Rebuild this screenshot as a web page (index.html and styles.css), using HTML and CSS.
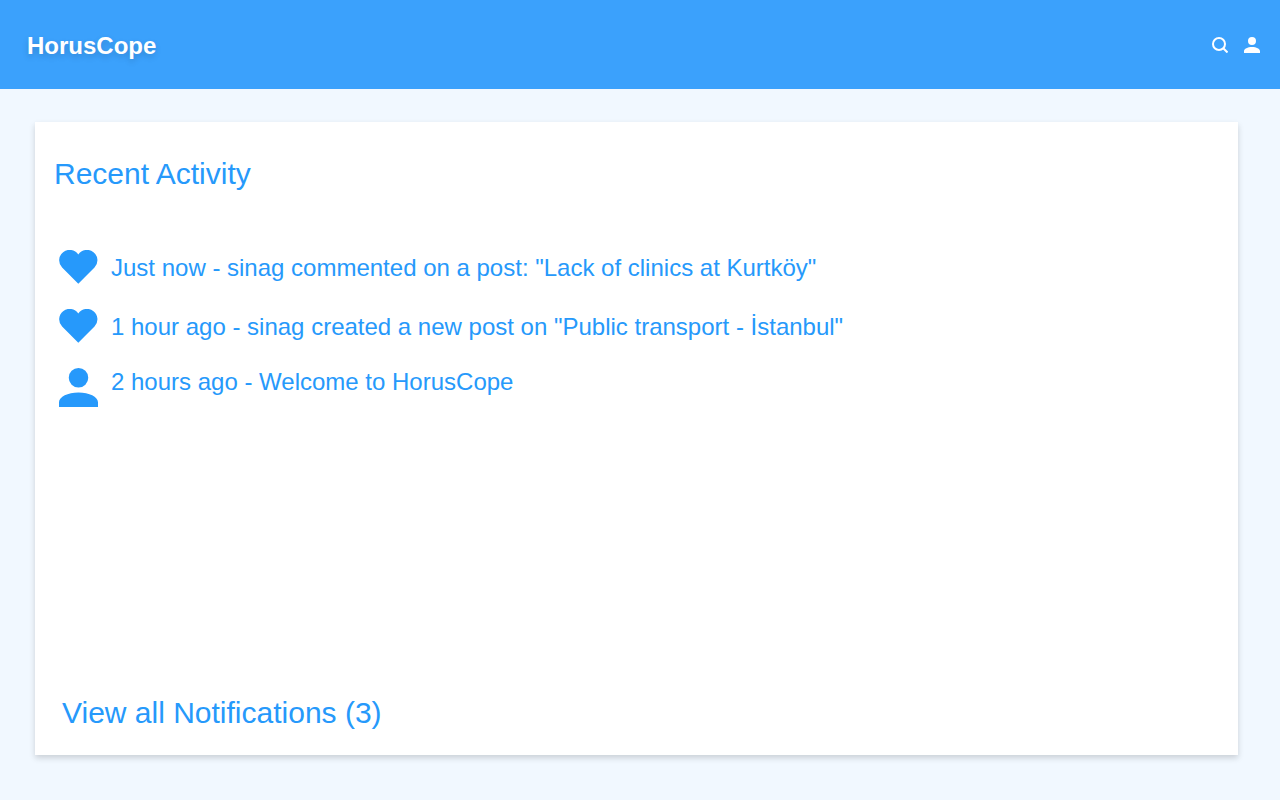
FILE: index.html
```html
<!DOCTYPE html>
<html lang="en">
<head>
<meta charset="utf-8">
<title>HorusCope</title>
<link rel="stylesheet" href="styles.css">
</head>
<body>
<header class="topbar">
  <a class="brand" href="#">HorusCope</a>
  <nav class="actions">
    <button class="icon-button" type="button" aria-label="Search">
      <svg viewBox="0 0 16 16" width="16" height="16" aria-hidden="true"><circle cx="7" cy="7" r="6" fill="none" stroke="currentColor" stroke-width="2"/><path d="M11.3 11.3 15.5 15.5" stroke="currentColor" stroke-width="2"/></svg>
    </button>
    <button class="icon-button" type="button" aria-label="Profile">
      <svg viewBox="0 0 16 16" width="16" height="16" aria-hidden="true"><path fill="currentColor" d="M8 8a4 4 0 1 0 0-8 4 4 0 0 0 0 8Zm0 2c-4.4 0-8 1.8-8 4v2h16v-2c0-2.2-3.6-4-8-4Z"/></svg>
    </button>
  </nav>
</header>
<main class="card">
  <h1 class="title">Recent Activity</h1>
  <ul class="feed">
    <li class="item">
      <svg class="item-icon heart" viewBox="0 0 39 35" aria-hidden="true"><path fill="currentColor" d="M19.3 4.6A10.4 10.4 0 1 0 3.1 17.5L19.3 33.7 35.5 17.5A10.4 10.4 0 1 0 19.3 4.6Z"/></svg>
      <span class="item-text">Just now - sinag commented on a post: "Lack of clinics at Kurtköy"</span>
    </li>
    <li class="item">
      <svg class="item-icon heart" viewBox="0 0 39 35" aria-hidden="true"><path fill="currentColor" d="M19.3 4.6A10.4 10.4 0 1 0 3.1 17.5L19.3 33.7 35.5 17.5A10.4 10.4 0 1 0 19.3 4.6Z"/></svg>
      <span class="item-text">1 hour ago - sinag created a new post on "Public transport - İstanbul"</span>
    </li>
    <li class="item item-welcome">
      <svg class="item-icon person" viewBox="0 0 16 16" aria-hidden="true"><path fill="currentColor" d="M8 8a4 4 0 1 0 0-8 4 4 0 0 0 0 8Zm0 2c-4.4 0-8 1.8-8 4v2h16v-2c0-2.2-3.6-4-8-4Z"/></svg>
      <span class="item-text">2 hours ago - Welcome to HorusCope</span>
    </li>
  </ul>
  <a class="view-all" href="#">View all Notifications (3)</a>
</main>
</body>
</html>
```
FILE: styles.css
```css
* { box-sizing: border-box; }
body {
  margin: 0;
  min-height: 100vh;
  display: flex;
  flex-direction: column;
  background: #f1f8ff;
  color: #2699fb;
  font-family: "Liberation Sans", Arial, sans-serif;
}
.topbar {
  display: flex;
  align-items: center;
  justify-content: space-between;
  padding: 32px 20px 29px 27px;
  background: #3ba1fc;
  color: #fff;
}
.brand {
  color: inherit;
  font-size: 24px;
  font-weight: bold;
  line-height: 28px;
  text-decoration: none;
  text-shadow: 0 3px 6px rgba(0, 0, 0, 0.16);
}
.actions {
  display: flex;
  gap: 16px;
  padding-bottom: 2px;
}
.icon-button {
  display: block;
  padding: 0;
  border: 0;
  background: none;
  color: inherit;
  line-height: 0;
  cursor: pointer;
}
.card {
  flex: 1;
  display: flex;
  flex-direction: column;
  align-items: flex-start;
  margin: 33px 42px 45px 35px;
  padding: 32px 19px 24px;
  background: #fff;
  box-shadow: 0 3px 6px rgba(0, 0, 0, 0.16);
}
.title {
  margin: 0;
  font-size: 30px;
  font-weight: normal;
  line-height: 40px;
}
.feed {
  display: flex;
  flex-direction: column;
  gap: 24px;
  margin: 56px 0 0;
  padding: 0 0 0 5px;
  list-style: none;
}
.item { display: flex; align-items: center; gap: 13px; }
.item-welcome { align-items: flex-start; }
.item-icon { flex: none; width: 39px; }
.heart { height: 35px; }
.person { height: 39px; }
.item-text { font-size: 24px; line-height: 28px; }
.view-all {
  margin-top: auto;
  margin-left: 8px;
  color: inherit;
  font-size: 30px;
  line-height: 36px;
  text-decoration: none;
}
```
